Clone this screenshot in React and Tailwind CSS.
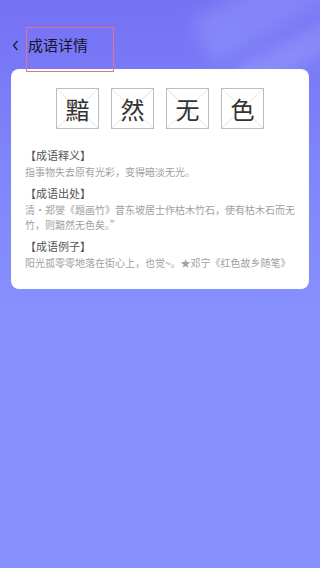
const chars = ["黯", "然", "无", "色"];

const sections = [
  { title: "【成语释义】", body: "指事物失去原有光彩，变得暗淡无光。" },
  {
    title: "【成语出处】",
    body: "清·郑燮《题画竹》昔东坡居士作枯木竹石，使有枯木石而无竹，则黯然无色矣。”",
  },
  { title: "【成语例子】", body: "阳光孤零零地落在街心上，也觉~。★邓宁《红色故乡随笔》" },
];

function CharBox({ ch }) {
  return (
    <div className="relative w-[43px] h-[41px] border border-[#bdbdbd] flex items-center justify-center">
      {/* 米字格 */}
      <svg className="absolute inset-0 w-full h-full" viewBox="0 0 43 41" preserveAspectRatio="none">
        <line x1="0" y1="0" x2="43" y2="41" stroke="#d9d9d9" strokeWidth="0.8" />
        <line x1="43" y1="0" x2="0" y2="41" stroke="#d9d9d9" strokeWidth="0.8" />
      </svg>
      <span className="relative text-[24px] leading-none text-[#333]">{ch}</span>
    </div>
  );
}

export default function App() {
  return (
    <div
      className="relative min-h-[568px] overflow-hidden bg-[linear-gradient(180deg,#7571f4_0%,#7f86fb_30%,#8892fe_60%,#8892fe_100%)]"
      style={{ fontFamily: '"Noto Sans CJK SC", "Noto Sans", sans-serif' }}
    >
      {/* light streaks, top right */}
      <div className="absolute -top-[30px] left-[190px] w-[200px] h-[50px] bg-[#a3afff]/30 blur-[8px] -rotate-[28deg]" />
      <div className="absolute top-[35px] left-[230px] w-[140px] h-[30px] bg-[#aebaff]/30 blur-[8px] -rotate-[28deg]" />

      <div className="relative pt-[27px]">
        {/* Header */}
        <div className="flex items-center h-[36px] pl-[12px]">
          <svg width="7" height="11" viewBox="0 0 7 11" className="mr-[9px]">
            <path d="M5.5 1 L1.5 5.5 L5.5 10" fill="none" stroke="#1c1c30" strokeWidth="1.3" />
          </svg>
          <span className="text-[15px] text-[#15152a]">成语详情</span>
        </div>
        <div className="absolute left-[26px] top-[27px] w-[88px] h-[45px] border border-solid border-[#e4747f] z-10" />

        {/* Card */}
        <div className="mx-[11px] mt-[6px] rounded-[8px] bg-white px-[14px] pt-[19px] pb-[19px]">
          <div className="flex justify-center gap-[12px]">
            {chars.map((c) => (
              <CharBox key={c} ch={c} />
            ))}
          </div>

          <div className="mt-[19px] flex flex-col gap-[7px]">
            {sections.map((s) => (
              <div key={s.title}>
                <div className="text-[11px] leading-[15px] font-normal text-[#555]">{s.title}</div>
                <div className="mt-[1px] text-[10px] leading-[15px] text-[#a0a0a0]">{s.body}</div>
              </div>
            ))}
          </div>
        </div>
      </div>
    </div>
  );
}
